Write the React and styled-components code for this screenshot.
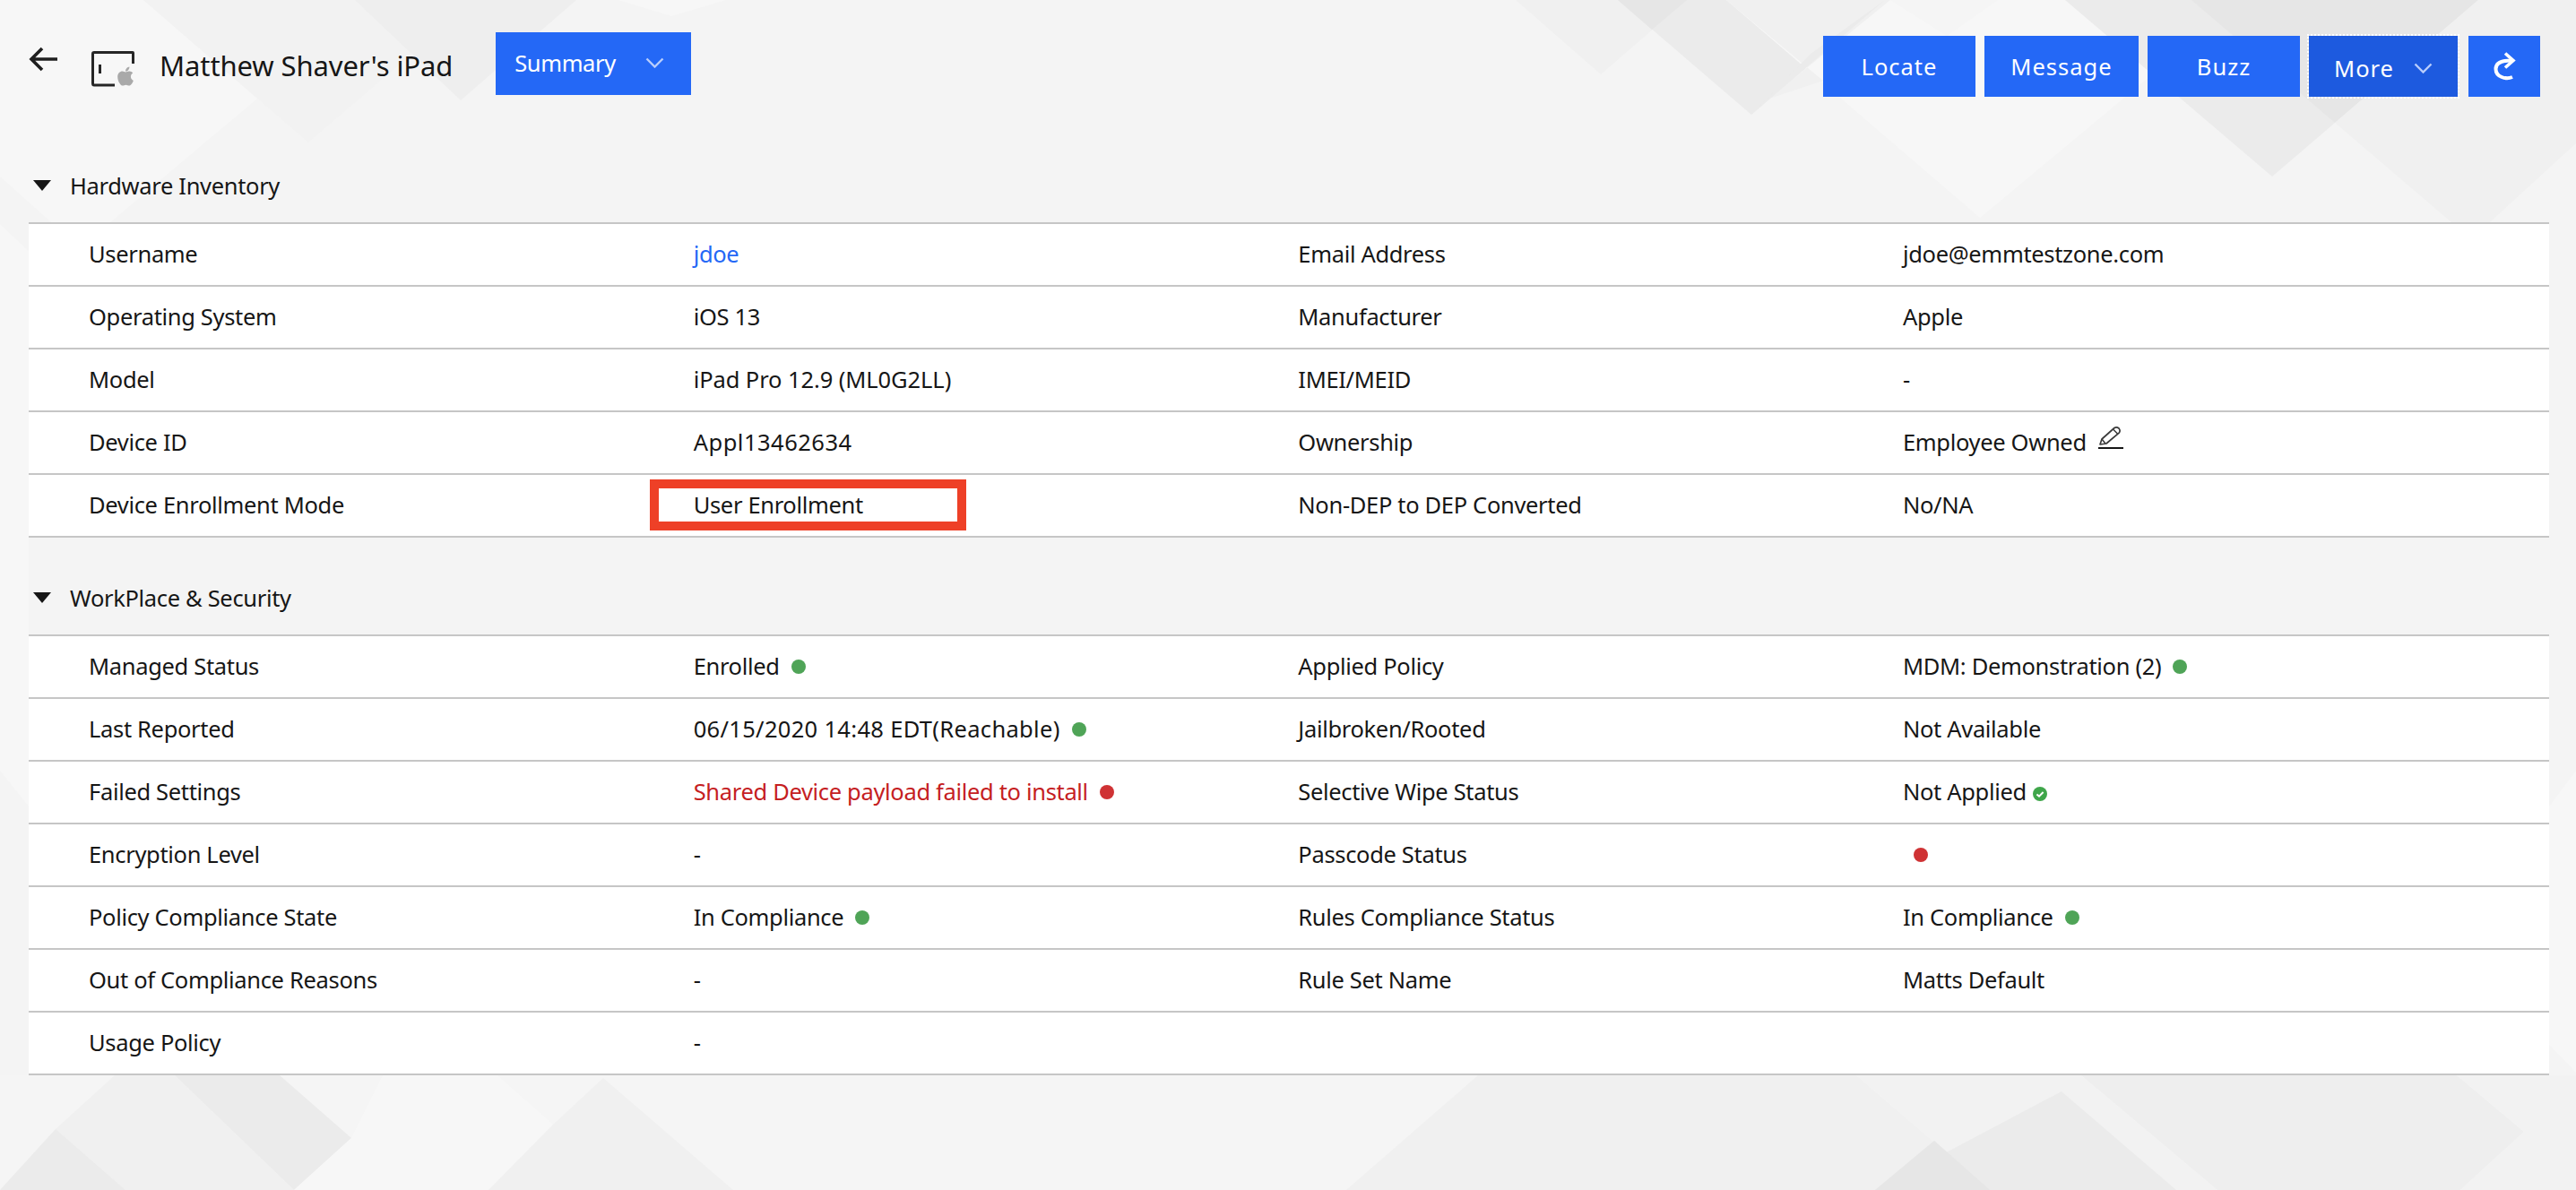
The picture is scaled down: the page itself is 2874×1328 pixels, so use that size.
import React from 'react';
import styled, { createGlobalStyle } from 'styled-components';
import { FaApple } from 'react-icons/fa';

const Global = createGlobalStyle`
  html, body { margin: 0; padding: 0; background: #f4f4f4; }
  body { font-family: "Noto Sans", "Open Sans", sans-serif; color: #161616; }
`;

const Page = styled.div`
  position: relative;
  width: 2874px;
  height: 1328px;
  overflow: hidden;
  background: #f4f4f4;
`;
const Backdrop = styled.svg`
  position: absolute;
  inset: 0;
  width: 100%;
  height: 100%;
`;
const Content = styled.div`
  position: relative;
  display: flex;
  flex-direction: column;
`;
const Header = styled.header`
  display: flex;
  align-items: flex-start;
  height: 180px;
  box-sizing: border-box;
  padding: 36px 40px 0 32px;
`;
const BackIcon = styled.svg`
  width: 32px;
  height: 28px;
  margin-top: 16px;
  flex: none;
`;
const DeviceIcon = styled.svg`
  width: 48px;
  height: 40px;
  margin: 21px 0 0 38px;
  flex: none;
`;
const Title = styled.h1`
  margin: 16px 0 0 28px;
  font-size: 31px;
  line-height: 42px;
  font-weight: 400;
  white-space: nowrap;
  letter-spacing: -0.1px;
`;
const ViewSelect = styled.button`
  display: flex;
  align-items: center;
  justify-content: space-between;
  width: 218px;
  height: 70px;
  margin-left: 48px;
  padding: 0 30px 2px 21px;
  border: 0;
  background: #2468f6;
  color: #fff;
  font: 400 25.5px "Noto Sans", sans-serif;
  letter-spacing: -0.4px;
`;
const Actions = styled.div`
  display: flex;
  gap: 10px;
  margin: 4px 0 0 auto;
`;
const ActionButton = styled.button`
  display: flex;
  align-items: center;
  justify-content: center;
  gap: 22px;
  width: ${p => p.$w}px;
  height: 68px;
  padding: ${p => (p.$focused ? '3px 0 0' : '0')};
  margin-left: ${p => p.$push || 0}px;
  border: 0;
  background: ${p => (p.$focused ? '#1d5adf' : '#2468f6')};
  color: #fff;
  font: 400 25.5px "Noto Sans", sans-serif;
  letter-spacing: 1px;
  outline: ${p => (p.$focused ? '2px dotted #fff' : 'none')};
  outline-offset: 0;
`;
const Chevron = styled.svg`
  width: 21px;
  height: 12px;
  flex: none;
`;
const SectionHead = styled.div`
  display: flex;
  align-items: center;
  gap: 21px;
  height: ${p => (p.$first ? 68 : 108)}px;
  box-sizing: border-box;
  padding: ${p => (p.$first ? 0 : 40)}px 0 14px 37px;
  font-size: 25.5px;
  letter-spacing: -0.33px;
`;
const Caret = styled.span`
  width: 0;
  height: 0;
  border-left: 10px solid transparent;
  border-right: 10px solid transparent;
  border-top: 12px solid #161616;
`;
const Table = styled.div`
  margin: 0 30px 0 32px;
  background: #fff;
  border-top: 2px solid #c6c6c6;
`;
const Row = styled.div`
  display: grid;
  grid-template-columns: repeat(3, 674.67px) 1fr;
  height: 70px;
  box-sizing: border-box;
  padding: 0 0 2px 67px;
  border-bottom: 2px solid #c6c6c6;
  font-size: 25.5px;
  letter-spacing: -0.33px;
`;
const Cell = styled.div`
  position: relative;
  display: flex;
  align-items: center;
  white-space: nowrap;
  color: ${p => p.$color || '#161616'};
`;
const ValueText = styled.span`
  letter-spacing: ${p => p.$track ?? -0.33}px;
`;
const Dot = styled.span`
  width: 16px;
  height: 16px;
  border-radius: 50%;
  flex: none;
  margin: 2px 0 0 ${p => p.$gap ?? 13}px;
  background: ${p => (p.$red ? '#cf3234' : '#4fa457')};
`;
const CheckBadge = styled.svg`
  width: 16px;
  height: 16px;
  flex: none;
  margin: 6px 0 0 7px;
`;
const EditIcon = styled.svg`
  width: 28px;
  height: 26px;
  flex: none;
  margin: -10px 0 0 13px;
`;
const Callout = styled.div`
  position: absolute;
  left: -49px;
  top: 5px;
  width: 353px;
  height: 57px;
  box-sizing: border-box;
  border: 10px solid #ee4027;
`;

const tones = { a: '#f7f7f7', b: '#f2f2f2', c: '#eeeeee', d: '#ebebeb', e: '#e6e6e6', f: '#f0f0f0', g: '#f5f5f5' };
const shapes = [
  ['a', '0,0 160,0 287,110 123,248 57,248 0,197'],
  ['b', '160,0 530,0 344,159'],
  ['c', '396,0 643,0 514,112'],
  ['a', '690,0 810,0 749,18'],
  ['f', '1691,0 1882,0 1786,83'],
  ['d', '1805,0 2103,0 1954,128'],
  ['e', '1805,0 1882,0 1843,33'],
  ['a', '1926,0 2501,0 2209,243'],
  ['f', '1926,0 2109,0 1974,110 2034,90'],
  ['d', '1954,128 2103,0 2020,60'],
  ['g', '2109,0 2229,0 2172,40'],
  ['d', '2304,0 2765,0 2535,197'],
  ['e', '2445,0 2765,0 2605,137'],
  ['f', '2765,0 2874,0 2874,160 2778,248 2735,248 2605,137'],
  ['a', '0,250 32,280 32,900 0,860'],
  ['a', '2844,900 2874,860 2874,1197 2844,1166'],
  ['g', '0,1200 2874,1200 2874,1328 0,1328'],
  ['f', '128,1200 195,1200 328,1328 140,1328 62,1260'],
  ['d', '195,1200 312,1200 392,1270 328,1328'],
  ['d', '62,1260 140,1328 0,1328'],
  ['a', '427,1200 555,1200 617,1255 545,1328 328,1328 392,1270'],
  ['f', '673,1203 818,1328 545,1328 617,1255'],
  ['f', '1649,1200 2071,1200 2220,1328 1502,1328'],
  ['b', '2071,1200 2322,1200 2474,1328 2220,1328'],
  ['d', '2300,1218 2428,1328 2092,1328'],
  ['e', '2158,1273 2220,1328 2092,1328'],
  ['c', '2322,1200 2741,1200 2816,1263 2745,1328 2474,1328'],
  ['b', '2741,1200 2874,1200 2874,1328 2745,1328 2816,1263'],
];

const ChevronDown = ({ tone = '#b9cdfb' }) => (
  <Chevron viewBox="0 0 21 12" fill="none">
    <path d="M1.5 1.5 L10.5 10.5 L19.5 1.5" stroke={tone} strokeWidth="2.4" />
  </Chevron>
);

const Pencil = () => (
  <EditIcon viewBox="0 0 28 26" fill="none" stroke="#3a3a3a">
    <path d="M0 25 H28" strokeWidth="2" stroke="#161616" />
    <path d="M2 21 L4 15 L18 2.5 Q20.5 0.8 23 3 Q25 5.5 23.4 7.8 L9 20 Z" strokeWidth="1.7" strokeLinejoin="round" />
    <path d="M16.5 4 L21.5 9 M4 15 L8 20" strokeWidth="1.5" />
  </EditIcon>
);

const Check = () => (
  <CheckBadge viewBox="0 0 16 16">
    <circle cx="8" cy="8" r="8" fill="#3fa64a" />
    <path d="M4.4 8.4 L7 10.6 L11.6 6" fill="none" stroke="#fff" strokeWidth="2" />
  </CheckBadge>
);

const hardware = [
  ['Username', { t: 'jdoe', color: '#2468f6' }, 'Email Address', { t: 'jdoe@emmtestzone.com' }],
  ['Operating System', { t: 'iOS 13' }, 'Manufacturer', { t: 'Apple' }],
  ['Model', { t: 'iPad Pro 12.9 (ML0G2LL)', track: -0.09 }, 'IMEI/MEID', { t: '-' }],
  ['Device ID', { t: 'Appl13462634', track: 0.5 }, 'Ownership', { t: 'Employee Owned', edit: true }],
  ['Device Enrollment Mode', { t: 'User Enrollment', callout: true }, 'Non-DEP to DEP Converted', { t: 'No/NA' }],
];
const security = [
  ['Managed Status', { t: 'Enrolled', dot: 'green' }, 'Applied Policy', { t: 'MDM: Demonstration (2)', dot: 'green' }],
  ['Last Reported', { t: '06/15/2020 14:48 EDT(Reachable)', track: 0.32, dot: 'green' }, 'Jailbroken/Rooted', { t: 'Not Available' }],
  ['Failed Settings', { t: 'Shared Device payload failed to install', color: '#c5201f', dot: 'red' }, 'Selective Wipe Status', { t: 'Not Applied', check: true }],
  ['Encryption Level', { t: '-' }, 'Passcode Status', { t: '', dot: 'red' }],
  ['Policy Compliance State', { t: 'In Compliance', dot: 'green' }, 'Rules Compliance Status', { t: 'In Compliance', dot: 'green' }],
  ['Out of Compliance Reasons', { t: '-' }, 'Rule Set Name', { t: 'Matts Default' }],
  ['Usage Policy', { t: '-' }, '', { t: '' }],
];

const Value = ({ v }) => (
  <Cell $color={v.color}>
    {v.callout && <Callout />}
    {v.t && <ValueText $track={v.track}>{v.t}</ValueText>}
    {v.dot && <Dot $red={v.dot === 'red'} $gap={v.t ? undefined : 12} />}
    {v.check && <Check />}
    {v.edit && <Pencil />}
  </Cell>
);

const Section = ({ title, rows, first }) => (
  <section>
    <SectionHead $first={first}>
      <Caret />
      {title}
    </SectionHead>
    <Table>
      {rows.map(r => (
        <Row key={r[0]}>
          <Cell>{r[0]}</Cell>
          <Value v={r[1]} />
          <Cell>{r[2]}</Cell>
          <Value v={r[3]} />
        </Row>
      ))}
    </Table>
  </section>
);

export default function App() {
  return (
    <Page>
      <Global />
      <Backdrop viewBox="0 0 2874 1328" aria-hidden="true">
        {shapes.map(([tone, points]) => (
          <polygon key={points} points={points} fill={tones[tone]} />
        ))}
      </Backdrop>
      <Content>
        <Header>
          <BackIcon viewBox="0 0 32 28" fill="none" stroke="#1f1f1f" strokeWidth="3.6">
            <path d="M32 14 H3 M15 2 L3 14 L15 26" />
          </BackIcon>
          <DeviceIcon viewBox="0 0 48 40" fill="none">
            <path d="M46.5 14 V2 Q46.5 1.5 46 1.5 H3 Q1.5 1.5 1.5 3 V36 Q1.5 38 3 38 H26" stroke="#262626" strokeWidth="3" />
            <path d="M9.5 15 V25" stroke="#262626" strokeWidth="3" />
            <FaApple x={26} y={16} size={24} color="#a9a9a9" />
          </DeviceIcon>
          <Title>Matthew Shaver's iPad</Title>
          <ViewSelect>
            Summary
            <ChevronDown />
          </ViewSelect>
          <Actions>
            <ActionButton $w={170}>Locate</ActionButton>
            <ActionButton $w={172}>Message</ActionButton>
            <ActionButton $w={170}>Buzz</ActionButton>
            <ActionButton $w={166} $focused>
              More
              <ChevronDown />
            </ActionButton>
            <ActionButton $w={80} $push={2} aria-label="Refresh">
              <svg width="26" height="32" viewBox="0 0 26 32" fill="none" stroke="#fff">
                <path d="M14 1.5 L23 9.5 L14 17.5" strokeWidth="3.6" />
                <path d="M22 28 C15 31 3.5 28 3.5 19 C3.5 13 9 9.5 21 9.5" strokeWidth="4" />
              </svg>
            </ActionButton>
          </Actions>
        </Header>
        <Section first title="Hardware Inventory" rows={hardware} />
        <Section title="WorkPlace & Security" rows={security} />
      </Content>
    </Page>
  );
}
